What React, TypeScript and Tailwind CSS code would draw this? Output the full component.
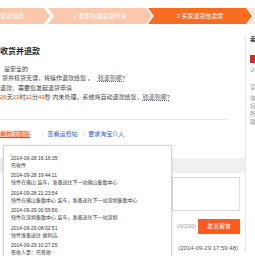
import React from 'react';

const logs = [
  { time: '2014-09-28 16:16:35', text: '已收件' },
  { time: '2014-09-28 19:44:11', text: '快件在佛山 装车，准备送往下一站佛山集散中心' },
  { time: '2014-09-28 21:23:54', text: '快件在佛山集散中心 装车，准备送往下一站深圳集散中心' },
  { time: '2014-09-29 00:59:56', text: '快件在深圳集散中心 装车，准备送往下一站深圳' },
  { time: '2014-09-29 08:02:51', text: '快件准备送往 便利店' },
  { time: '2014-09-29 10:27:25', text: '签收人是：已签收' },
];

const App: React.FC = () => {
  return (
    <div className="w-[255px] h-[256px] overflow-hidden bg-white text-[#333] font-['Liberation_Sans','Noto_Sans_CJK_SC',sans-serif]">
      {/* 步骤条 */}
      <div className="mt-[8px] h-[16px] flex text-[6px] leading-[16px] text-white whitespace-nowrap">
        <div className="w-[50px] shrink-0 bg-[#fbc8ae] pl-[0px] [clip-path:polygon(0_0,calc(100%_-_6px)_0,100%_50%,calc(100%_-_6px)_100%,0_100%)]">
          退货退款
        </div>
        <div className="w-[104px] shrink-0 -ml-[2px] bg-[#fbc8ae] text-center [clip-path:polygon(0_0,calc(100%_-_6px)_0,100%_50%,calc(100%_-_6px)_100%,0_100%,6px_50%)]">
          2 卖家处理退货申请
        </div>
        <div className="w-[104px] shrink-0 -ml-[4px] bg-[#fa6b22] text-center [clip-path:polygon(0_0,calc(100%_-_6px)_0,100%_50%,calc(100%_-_6px)_100%,0_100%,6px_50%)]">
          3 买家退货给卖家
        </div>
        <div className="w-[60px] shrink-0 -ml-[4px] bg-[#fde4d8] [clip-path:polygon(0_0,100%_0,100%_100%,0_100%,6px_50%)]" />
      </div>

      <div className="flex">
        {/* 左侧主体 */}
        <div className="w-[245px] shrink-0">
          <h2 className="mt-[23px] text-[8px] leading-[10px] font-bold text-[#222]">收货并退款</h2>
          <div className="mt-[7.5px] text-[6px] leading-[9.5px] text-[#444] whitespace-nowrap">
            <div className="pl-[4px]">是安全的</div>
            <div className="pl-[2px]">
              货并核货无误，将操作退款给您 。
              <span className="ml-[4px] text-[#666] underline decoration-dotted">钱退到哪?</span>
            </div>
            <div>退款，需要您发起退货申请</div>
            <div>
              <span className="text-[#f40]">26</span>天<span className="text-[#f40]">23</span>时
              <span className="text-[#f40]">22</span>分<span className="text-[#f40]">49</span>秒 内未处理，系统将自动退款给您，
              <span className="text-[#666] underline decoration-dotted">钱退到哪?</span>
            </div>
          </div>

          <div className="mt-[16px] w-[228px] border-t border-[#e6e6e6]" />

          {/* 操作链接 */}
          <div className="relative mt-[9px] h-[12px] flex items-center text-[6px] whitespace-nowrap">
            <span className="-ml-[7px] px-[1px] bg-[#fde9e2] text-[#f40] underline">查看物流跟踪</span>
            <span className="ml-[11px] text-[#ccc]">|</span>
            <span className="ml-[4px] text-[#36c]">查看运费帖</span>
            <span className="ml-[5px] text-[#ccc]">|</span>
            <span className="ml-[4px] text-[#36c]">要求淘宝介入</span>

            {/* 物流浮层 */}
            <div className="absolute left-[3px] top-[16px] z-10 w-[169px] h-[130px] bg-white border border-[#d4d4d4] shadow-[0_1px_3px_rgba(0,0,0,0.12)] pt-[9px] pl-[7px] text-[5px] leading-[7px] text-[#333]">
              {logs.map((log, i) => (
                <div key={i} className="mb-[3.6px]">
                  <div>{log.time}</div>
                  <div>{log.text}</div>
                </div>
              ))}
            </div>
          </div>

          {/* 留言 */}
          <div className="mt-[17px]">
            <div className="h-[15px] bg-[#f0f0f0]" />
            <div className="mt-[4px] ml-auto mr-[5px] w-[68px] h-[34px] border border-[#dcdcdc]" />
            <div className="mt-[8px] pr-[5px] flex justify-end items-center gap-[2px] whitespace-nowrap">
              <span className="text-[6px] text-[#999]">(0/200)</span>
              <button className="w-[42px] h-[15px] bg-[#ff5a1f] text-white text-[6px]">发表留言</button>
            </div>
            <div className="mt-[11px] pr-[7px] flex justify-end text-[6px] leading-[7px] text-[#555]">(2014-09-29 17:59:48)</div>
          </div>
        </div>

        {/* 右侧信息栏 */}
        <div className="mt-[11px] flex-1 border-l border-[#e6e6e6] pl-[4px] text-[6px] leading-[8px] whitespace-nowrap overflow-hidden">
          <div className="font-bold text-[#333]">卖家信息</div>
          <div className="mt-[12px] w-[8px] h-[8px] bg-[#d9272e]" />
          <div className="mt-[2px] text-[5px] text-[#5a5]">认证</div>
          <div className="mt-[10px] text-[#999]">掌柜</div>
          <div className="mt-[3px] text-[#999]">信誉</div>
          <div className="text-[#999]">好评</div>
          <div className="text-[#999]">所在</div>
          <div className="text-[#999]">联系</div>
        </div>
      </div>
    </div>
  );
};

export default App;
